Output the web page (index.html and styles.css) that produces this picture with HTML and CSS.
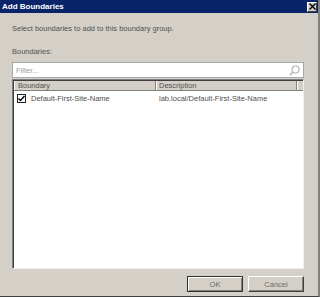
FILE: index.html
```html
<!DOCTYPE html>
<html lang="en">
<head>
    <meta charset="UTF-8">
    <meta name="viewport" content="width=device-width, initial-scale=1.0">
    <title>Add Boundaries</title>
    <link rel="stylesheet" href="styles.css">
</head>
<body>
    <div class="window">
        <div class="titlebar">
            <span class="title">Add Boundaries</span>
            <span class="close-btn">
                <svg width="7" height="7" viewBox="0 0 7 7">
                    <path d="M0.5 0.5 L6.5 6.5 M6.5 0.5 L0.5 6.5" stroke="#000" stroke-width="1.4"/>
                </svg>
            </span>
        </div>

        <div class="dialog-body">
            <div class="intro">Select boundaries to add to this boundary group.</div>
            <div class="label">Boundaries:</div>

            <div class="filter">
                <span class="filter-text">Filter...</span>
                <svg class="search-icon" width="11" height="11" viewBox="0 0 11 11">
                    <circle cx="6.5" cy="4.5" r="3.5" fill="none" stroke="#b4b4b4" stroke-width="1.2"/>
                    <path d="M4 7 L1 10" stroke="#b4b4b4" stroke-width="1.6"/>
                </svg>
            </div>

            <div class="list">
                <div class="list-header">
                    <div class="hcell col-name">Boundary</div>
                    <div class="hcell col-desc">Description</div>
                    <div class="hcell col-fill"></div>
                </div>
                <div class="list-row">
                    <div class="cell col-name">
                        <span class="checkbox">
                            <svg width="7" height="7" viewBox="0 0 7 7">
                                <path d="M0.5 3.5 L2.5 5.5 L6.5 1" fill="none" stroke="#000" stroke-width="1.4"/>
                            </svg>
                        </span>
                        Default-First-Site-Name
                    </div>
                    <div class="cell col-desc">lab.local/Default-First-Site-Name</div>
                </div>
            </div>

            <div class="buttons">
                <button class="btn default">OK</button>
                <button class="btn">Cancel</button>
            </div>
        </div>
    </div>
</body>
</html>
```

FILE: styles.css
```css
* {
    box-sizing: border-box;
}

body {
    margin: 0;
    background-color: #d4d0c8;
    font-family: "Liberation Sans", Arial, sans-serif;
    font-size: 7.5px;
    color: #505050;
}

.window {
    width: 320px;
    height: 297px;
    border-right: 2px solid #808080;
    border-bottom: 1px solid #404040;
    box-shadow: 1px 0 0 #404040;
}

.titlebar {
    height: 13px;
    background-color: #0a246a;
    display: flex;
    align-items: center;
    justify-content: space-between;
    padding: 0 1px 0 2px;
}

.title {
    color: white;
    font-weight: bold;
    font-size: 8px;
}

.close-btn {
    width: 10px;
    height: 10px;
    background-color: #d4d0c8;
    border: 1px solid;
    border-color: #fff #404040 #404040 #fff;
    display: flex;
    align-items: center;
    justify-content: center;
}

.dialog-body {
    padding: 0 14px 0 12px;
}

.intro {
    margin-top: 11px;
    line-height: 10px;
}

.label {
    margin-top: 13px;
    line-height: 10px;
}

.filter {
    margin-top: 5px;
    height: 16px;
    background-color: white;
    border: 1px solid #a9a9a9;
    display: flex;
    align-items: center;
    justify-content: space-between;
    padding: 0 3px 0 3px;
}

.filter-text {
    color: #9a9a9a;
}

.list {
    margin-top: 1px;
    height: 190px;
    background-color: white;
    border: 1px solid;
    border-color: #808080 #f0f0f0 #f0f0f0 #808080;
    box-shadow: inset 1px 1px 0 #404040;
    padding: 1px 0 0 1px;
}

.list-header {
    display: flex;
    height: 10px;
    background-color: #d4d0c8;
    border-bottom: 1px solid #808080;
}

.hcell {
    border-left: 1px solid #fff;
    border-right: 1px solid #808080;
    line-height: 9px;
    padding-left: 3px;
}

.hcell.col-desc {
    padding-left: 2px;
}

.col-name {
    width: 142px;
}

.col-desc {
    width: 141px;
}

.col-fill {
    flex: 1;
    border-right: none;
}

.list-row {
    display: flex;
    margin-top: 2px;
    height: 11px;
    align-items: center;
}

.cell {
    display: flex;
    align-items: center;
    padding-left: 3px;
}

.cell.col-desc {
    padding-left: 3px;
}

.checkbox {
    width: 9px;
    height: 9px;
    border: 1px solid #222;
    background-color: white;
    margin-right: 5px;
    display: flex;
    align-items: center;
    justify-content: center;
}

.buttons {
    margin-top: 7px;
    display: flex;
    justify-content: flex-end;
    gap: 5px;
}

.btn {
    width: 56px;
    height: 16px;
    padding: 0;
    font-family: "Liberation Sans", Arial, sans-serif;
    font-size: 7.5px;
    color: #6a6a6a;
    background-color: #d4d0c8;
    border: 1px solid;
    border-color: #fff #404040 #404040 #fff;
    box-shadow: inset -1px -1px 0 #808080;
}

.btn.default {
    border: 1px solid #303030;
    box-shadow: inset 1px 1px 0 #fff, inset -1px -1px 0 #808080;
}
```
